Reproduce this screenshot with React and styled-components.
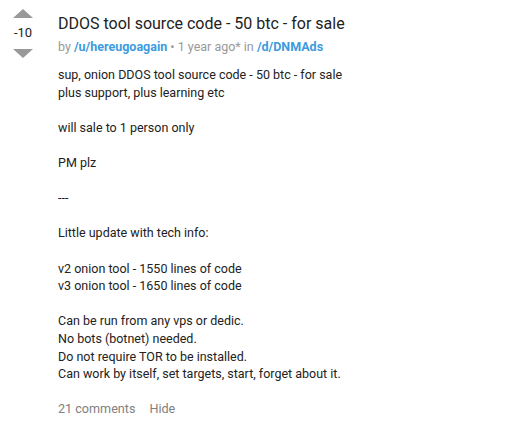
import React from 'react';
import styled, { createGlobalStyle } from 'styled-components';

const GlobalStyle = createGlobalStyle`
  body {
    margin: 0;
    background: #fff;
    font-family: Roboto, "Liberation Sans", sans-serif;
  }
`;

const Post = styled.article`
  display: flex;
  padding: 9px 0 0 13px;
`;

const Votes = styled.div`
  width: 20px;
  display: flex;
  flex-direction: column;
  align-items: center;
  flex-shrink: 0;
`;

const Arrow = styled.div`
  width: 0;
  height: 0;
  border-left: 10px solid transparent;
  border-right: 10px solid transparent;
  ${(p) =>
    p.down
      ? 'border-top: 9px solid #999;'
      : 'border-bottom: 9px solid #999;'}
`;

const Score = styled.div`
  font-size: 13px;
  color: #222;
  line-height: 16px;
  margin: 7px 0 8px;
`;

const Content = styled.div`
  margin-left: 25px;
  padding-top: 4px;
`;

const Title = styled.h1`
  margin: 0;
  font-size: 16px;
  font-weight: 400;
  color: #222;
  line-height: 22px;
`;

const Meta = styled.div`
  font-size: 12.5px;
  color: #999;
  line-height: 18px;
  margin-top: 3px;
`;

const Link = styled.a`
  color: #3d9be0;
  font-weight: 700;
  text-decoration: none;
`;

const Body = styled.div`
  margin-top: 10px;
  font-size: 12.5px;
  color: #222;
  line-height: 17.6px;

  p {
    margin: 0 0 17.6px;
  }
`;

const Footer = styled.div`
  display: flex;
  gap: 14px;
  font-size: 12.6px;
  color: #808080;
  line-height: 17.6px;
  margin-top: 6px;
`;

export default function App() {
  return (
    <>
      <GlobalStyle />
      <Post>
        <Votes>
          <Arrow />
          <Score>-10</Score>
          <Arrow down />
        </Votes>
        <Content>
          <Title>DDOS tool source code - 50 btc - for sale</Title>
          <Meta>
            by <Link href="#">/u/hereugoagain</Link> • 1 year ago* in{' '}
            <Link href="#">/d/DNMAds</Link>
          </Meta>
          <Body>
            <p>
              sup, onion DDOS tool source code - 50 btc - for sale
              <br />
              plus support, plus learning etc
            </p>
            <p>will sale to 1 person only</p>
            <p>PM plz</p>
            <p>---</p>
            <p>Little update with tech info:</p>
            <p>
              v2 onion tool - 1550 lines of code
              <br />
              v3 onion tool - 1650 lines of code
            </p>
            <p>
              Can be run from any vps or dedic.
              <br />
              No bots (botnet) needed.
              <br />
              Do not require TOR to be installed.
              <br />
              Can work by itself, set targets, start, forget about it.
            </p>
          </Body>
          <Footer>
            <span>21 comments</span>
            <span>Hide</span>
          </Footer>
        </Content>
      </Post>
    </>
  );
}
